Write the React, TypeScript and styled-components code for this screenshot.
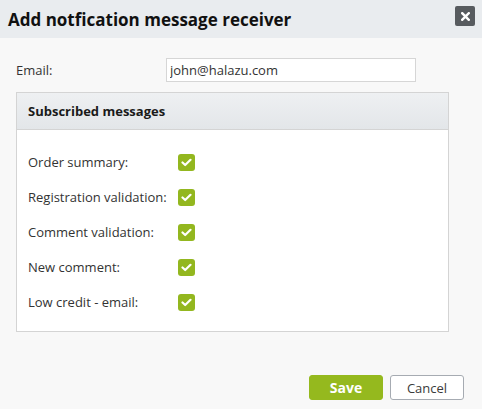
import React from "react";
import styled, { createGlobalStyle } from "styled-components";

const Global = createGlobalStyle`
  html, body { margin: 0; padding: 0; background: #f8f8f8; }
  body { font-family: "Open Sans", "Noto Sans", sans-serif; color: #333; }
  * { box-sizing: border-box; }
`;

const Dialog = styled.div`
  width: 482px;
  height: 409px;
  background: #f8f8f8;
  display: flex;
  flex-direction: column;
`;

const Header = styled.div`
  height: 38px;
  background: #e9ecef;
  display: flex;
  align-items: center;
  justify-content: space-between;
  padding: 0 7px 0 8px;
`;

const Title = styled.h1`
  margin: 0;
  font-size: 17px;
  font-weight: 700;
  color: #111;
  letter-spacing: 0;
`;

const Close = styled.button`
  width: 20px;
  height: 20px;
  margin-top: -6px;
  border: none;
  border-radius: 2px;
  background: #575b5f;
  padding: 0;
  display: flex;
  align-items: center;
  justify-content: center;
`;

const Body = styled.div`
  flex: 1;
  padding: 20px 0 0 16px;
  display: flex;
  flex-direction: column;
`;

const FieldRow = styled.div`
  display: flex;
  align-items: center;
  height: 24px;
`;

const Label = styled.label`
  font-size: 13px;
  color: #333;
  width: 150px;
  flex-shrink: 0;
`;

const Input = styled.input`
  width: 250px;
  height: 24px;
  border: 1px solid #d6d6d6;
  background: #fff;
  font-family: "Open Sans", sans-serif;
  font-size: 13px;
  color: #333;
  padding: 0 3px;
  outline: none;
`;

const Panel = styled.div`
  margin-top: 10px;
  width: 433px;
  border: 1px solid #d4d4d4;
  background: #fff;
`;

const PanelHeader = styled.div`
  height: 37px;
  background: linear-gradient(#eef0f2, #e3e6e9);
  border-bottom: 1px solid #d4d4d4;
  display: flex;
  align-items: center;
  padding-left: 11px;
  font-size: 13px;
  font-weight: 700;
  color: #1a1a1a;
`;

const PanelBody = styled.div`
  padding: 14px 0 12px 11px;
  display: grid;
  grid-template-columns: 150px 20px;
  grid-auto-rows: 35px;
  align-items: center;
`;

const RowLabel = styled.span`
  font-size: 13px;
  color: #333;
`;

const Check = styled.span`
  width: 17px;
  height: 17px;
  border-radius: 3px;
  background: #93b71f;
  display: flex;
  align-items: center;
  justify-content: center;
  margin-top: 1px;
`;

const Footer = styled.div`
  margin-top: auto;
  display: flex;
  justify-content: flex-end;
  gap: 7px;
  padding: 0 18px 9px 0;
`;

const Button = styled.button<{ $primary?: boolean }>`
  width: 74px;
  height: 25px;
  border-radius: 3px;
  font-family: "Open Sans", sans-serif;
  font-size: ${(p) => (p.$primary ? "14px" : "13px")};
  font-weight: ${(p) => (p.$primary ? 700 : 400)};
  color: ${(p) => (p.$primary ? "#fff" : "#3a3a3a")};
  background: ${(p) => (p.$primary ? "#95b91e" : "#fff")};
  border: 1px solid ${(p) => (p.$primary ? "#95b91e" : "#a6abb2")};
  padding: 0;
`;

const items = [
  "Order summary:",
  "Registration validation:",
  "Comment validation:",
  "New comment:",
  "Low credit - email:",
];

const Tick = () => (
  <svg width="11" height="9" viewBox="0 0 11 9">
    <path d="M1.5 4.5 L4.2 7 L9.5 1.8" fill="none" stroke="#fff" strokeWidth="2.2" strokeLinecap="round" strokeLinejoin="round" />
  </svg>
);

const Cross = () => (
  <svg width="9" height="9" viewBox="0 0 9 9">
    <path d="M1.2 1.2 L7.8 7.8 M7.8 1.2 L1.2 7.8" stroke="#fff" strokeWidth="2.4" strokeLinecap="square" />
  </svg>
);

export default function App() {
  return (
    <>
      <Global />
      <Dialog>
        <Header>
          <Title>Add notfication message receiver</Title>
          <Close aria-label="close">
            <Cross />
          </Close>
        </Header>
        <Body>
          <FieldRow>
            <Label>Email:</Label>
            <Input defaultValue="john@halazu.com" />
          </FieldRow>
          <Panel>
            <PanelHeader>Subscribed messages</PanelHeader>
            <PanelBody>
              {items.map((it) => (
                <React.Fragment key={it}>
                  <RowLabel>{it}</RowLabel>
                  <Check>
                    <Tick />
                  </Check>
                </React.Fragment>
              ))}
            </PanelBody>
          </Panel>
        </Body>
        <Footer>
          <Button $primary>Save</Button>
          <Button>Cancel</Button>
        </Footer>
      </Dialog>
    </>
  );
}
